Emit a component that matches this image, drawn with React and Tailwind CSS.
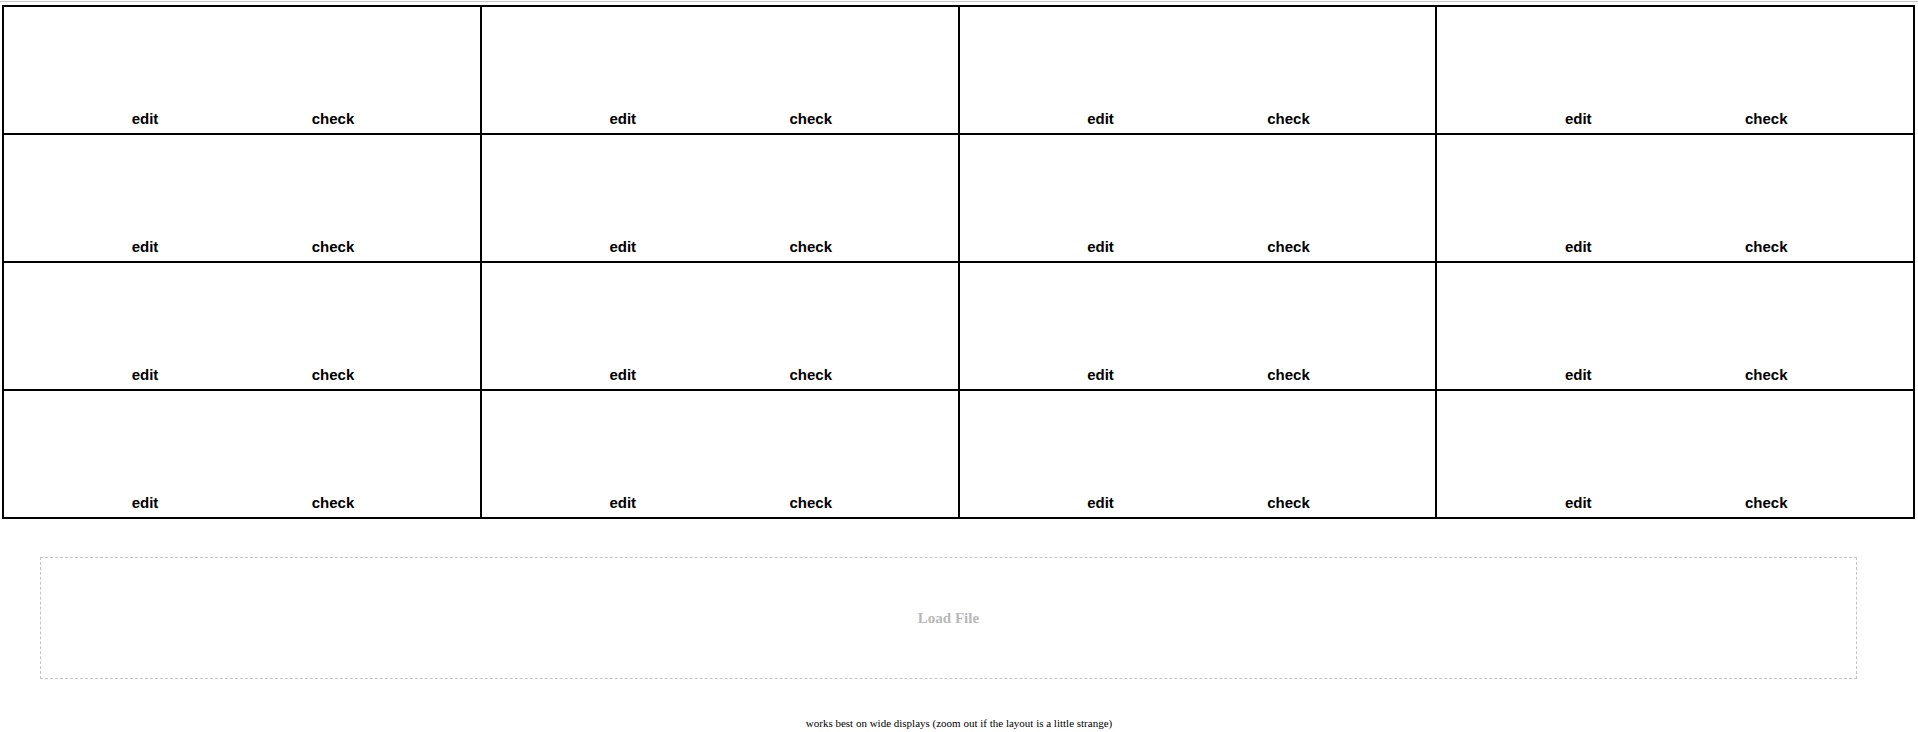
export default function App() {
  const cells = Array.from({ length: 16 }, (_, i) => i);
  return (
    <div className="w-[1918px] min-h-[732px] bg-white pt-[1px]">
      <div className="h-[1px] w-full bg-[#c4c4c4]" />
      <div className="ml-[2px] mt-[3px] grid w-[1913px] grid-cols-4 gap-[2px] bg-black p-[2px]">
        {cells.map((i) => (
          <div key={i} className="flex h-[126px] flex-col justify-end bg-white pb-[6px]">
            <div className="flex flex-row font-['Liberation_Sans',Arial,sans-serif] text-[15px] font-bold leading-[17px] text-black">
              <div className="ml-[91px] w-[100px] text-center">edit</div>
              <div className="ml-[88px] w-[100px] text-center">check</div>
            </div>
          </div>
        ))}
      </div>
      <div className="ml-[40px] mt-[38px] flex h-[122px] w-[1817px] items-center justify-center border border-dashed border-[#c4c4c4]">
        <span className="font-['Liberation_Serif','Times_New_Roman',serif] text-[15px] font-bold text-[#b8b8b8]">Load File</span>
      </div>
      <div className="mt-[36px] w-[1918px] text-center font-['Liberation_Serif','Times_New_Roman',serif] text-[11px] text-black">
        works best on wide displays (zoom out if the layout is a little strange)
      </div>
    </div>
  );
}
